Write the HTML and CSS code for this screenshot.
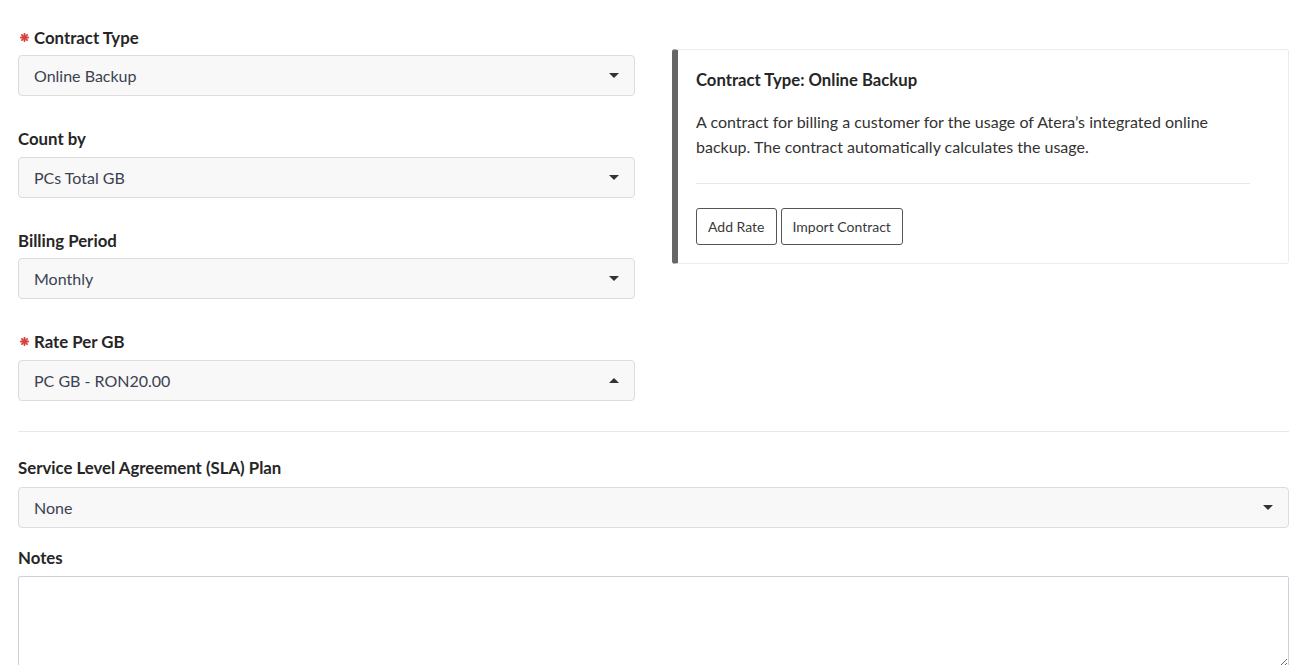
FILE: index.html
```html
<!DOCTYPE html>
<html lang="en">
<head>
    <meta charset="UTF-8">
    <title>Contract</title>
    <link rel="stylesheet" href="styles.css">
</head>
<body>
    <div class="contract-form">
        <div class="top-row">
            <div class="left-col">
                <div class="field">
                    <label class="field-label">
                        <svg class="req" width="9" height="9" viewBox="0 0 9 9"><g stroke="#d9413b" stroke-width="1.8" stroke-linecap="round"><line x1="4.5" y1="0.8" x2="4.5" y2="8.2"/><line x1="0.8" y1="4.5" x2="8.2" y2="4.5"/><line x1="1.9" y1="1.9" x2="7.1" y2="7.1"/><line x1="7.1" y1="1.9" x2="1.9" y2="7.1"/></g></svg>
                        Contract Type
                    </label>
                    <div class="select"><span>Online Backup</span><i class="caret"></i></div>
                </div>
                <div class="field">
                    <label class="field-label">Count by</label>
                    <div class="select"><span>PCs Total GB</span><i class="caret"></i></div>
                </div>
                <div class="field">
                    <label class="field-label">Billing Period</label>
                    <div class="select"><span>Monthly</span><i class="caret"></i></div>
                </div>
                <div class="field">
                    <label class="field-label">
                        <svg class="req" width="9" height="9" viewBox="0 0 9 9"><g stroke="#d9413b" stroke-width="1.8" stroke-linecap="round"><line x1="4.5" y1="0.8" x2="4.5" y2="8.2"/><line x1="0.8" y1="4.5" x2="8.2" y2="4.5"/><line x1="1.9" y1="1.9" x2="7.1" y2="7.1"/><line x1="7.1" y1="1.9" x2="1.9" y2="7.1"/></g></svg>
                        Rate Per GB
                    </label>
                    <div class="select"><span>PC GB - RON20.00</span><i class="caret up"></i></div>
                </div>
            </div>

            <div class="info-card">
                <h4>Contract Type: Online Backup</h4>
                <p>A contract for billing a customer for the usage of Atera’s integrated online backup. The contract automatically calculates the usage.</p>
                <hr>
                <div class="card-actions">
                    <button class="btn">Add Rate</button>
                    <button class="btn">Import Contract</button>
                </div>
            </div>
        </div>

        <hr class="divider">

        <div class="field sla">
            <label class="field-label">Service Level Agreement (SLA) Plan</label>
            <div class="select"><span>None</span><i class="caret"></i></div>
        </div>
        <div class="field notes">
            <label class="field-label">Notes</label>
            <textarea class="notes-box"></textarea>
        </div>
    </div>
</body>
</html>
```

FILE: styles.css
```css
* {
    margin: 0;
    padding: 0;
    box-sizing: border-box;
}

body {
    font-family: Lato, "Open Sans", sans-serif;
    background: #fff;
    color: #333;
    font-size: 16px;
}

.contract-form {
    width: 1289px;
    padding: 27px 0 0 18px;
}

.top-row {
    display: flex;
    gap: 37px;
    align-items: flex-start;
}

.left-col {
    width: 617px;
}

.field {
    margin-bottom: 32.67px;
}

.field:last-child {
    margin-bottom: 0;
}

.field-label {
    display: flex;
    align-items: center;
    gap: 5px;
    height: 20px;
    font-weight: 700;
    font-size: 16.8px;
    color: #262626;
}

.req {
    margin-left: 2px;
}

.select {
    display: flex;
    align-items: center;
    justify-content: space-between;
    height: 41px;
    margin-top: 8px;
    padding: 0 15px 0 15px;
    background: #f8f8f8;
    border: 1px solid #dcdcdc;
    border-radius: 4px;
    color: #3a4250;
    font-size: 16px;
}

.caret {
    width: 0;
    height: 0;
    border-left: 5px solid transparent;
    border-right: 5px solid transparent;
    border-top: 5px solid #333;
}

.caret.up {
    border-top: none;
    border-bottom: 5px solid #333;
}

.info-card {
    width: 617px;
    margin-top: 22px;
    padding: 20px 38px 18px 18px;
    border: 1px solid #ececec;
    border-left: 6px solid #666;
    border-radius: 3px;
}

.info-card h4 {
    font-size: 16.7px;
    line-height: 20px;
    font-weight: 700;
    color: #262626;
}

.info-card p {
    margin-top: 19px;
    line-height: 25px;
    color: #333;
}

.info-card hr {
    border: none;
    border-top: 1px solid #e8e8e8;
    margin: 24px 0 24px;
}

.card-actions {
    display: flex;
    gap: 4px;
}

.btn {
    height: 37px;
    padding: 0 11px;
    background: #fff;
    border: 1px solid #555;
    border-radius: 3px;
    font-family: inherit;
    font-size: 14px;
    color: #3a3a3a;
}

.divider {
    border: none;
    border-top: 1px solid #e8e8e8;
    margin: 30px 0 26px;
}

.sla {
    margin-bottom: 20px;
}

.sla .select {
    margin-top: 9px;
}

.notes-box {
    display: block;
    width: 100%;
    height: 92px;
    margin-top: 8px;
    border: 1px solid #cfd0dc;
    border-radius: 2px;
    background: #fff;
    font-family: inherit;
}
```
